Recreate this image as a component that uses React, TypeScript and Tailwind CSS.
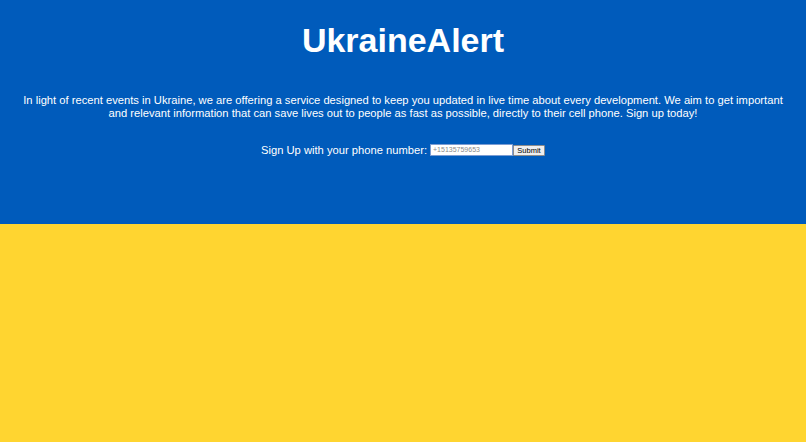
import React from "react";

const App = () => {
  return (
    <div className="min-h-[442px] flex flex-col bg-[#ffd530] font-['Liberation_Sans',Arial,sans-serif]">
      <div className="h-[224px] bg-[#005bbb] text-white text-center pt-[20px] px-[20px]">
        <h1 className="text-[34px] leading-[40px] font-bold">UkraineAlert</h1>
        <p className="mt-[34px] text-[11.2px] leading-[13px]">
          In light of recent events in Ukraine, we are offering a service designed to keep you updated in live time about every
          development. We aim to get important and relevant information that can save lives out to people as fast as possible,
          directly to their cell phone. Sign up today!
        </p>
        <form className="mt-[23px] flex items-center justify-center text-[11.2px] leading-[14px]">
          <label htmlFor="phone" className="mr-[3px]">Sign Up with your phone number:</label>
          <input
            id="phone"
            type="tel"
            placeholder="+15135759653"
            className="w-[83px] h-[12px] bg-white border border-[#7a9cd3] px-[2px] text-[7px] text-black placeholder:text-[#8a8a8a] outline-none"
          />
          <button
            type="button"
            className="w-[32px] h-[11px] bg-[#efefef] border border-[#8d8d8d] rounded-[1px] text-[7.5px] leading-[9px] text-black"
          >
            Submit
          </button>
        </form>
      </div>
      <div className="flex-1" />
    </div>
  );
};

export default App;
